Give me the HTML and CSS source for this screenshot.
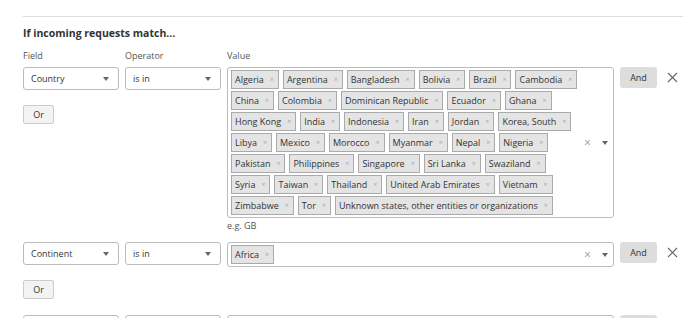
FILE: index.html
```html
<!DOCTYPE html>
<html lang="en">
<head>
  <meta charset="UTF-8" />
  <title>Rule builder</title>
  <link rel="stylesheet" href="styles.css">
</head>
<body>
  <div class="page">
    <p class="cut-text">Describe this rule so you can spot it later quickly</p>
    <hr class="divider">

    <h2 class="section-title">If incoming requests match...</h2>

    <div class="labels">
      <span class="col-field">Field</span>
      <span class="col-op">Operator</span>
      <span class="col-value">Value</span>
    </div>

    <!-- Expression 1 -->
    <div class="expr">
      <div class="col-field">
        <div class="select">Country <span class="caret"></span></div>
        <button class="btn-or">Or</button>
      </div>
      <div class="col-op">
        <div class="select">is in <span class="caret"></span></div>
      </div>
      <div class="col-value">
        <div class="multi" id="countries"></div>
        <div class="hint">e.g. GB</div>
      </div>
      <button class="btn-and">And</button>
      <span class="remove">
        <svg width="11" height="11" viewBox="0 0 11 11"><path d="M1 1L10 10M10 1L1 10" stroke="#666" stroke-width="1.1" fill="none"/></svg>
      </span>
    </div>

    <!-- Expression 2 -->
    <div class="expr">
      <div class="col-field">
        <div class="select">Continent <span class="caret"></span></div>
        <button class="btn-or">Or</button>
      </div>
      <div class="col-op">
        <div class="select">is in <span class="caret"></span></div>
      </div>
      <div class="col-value">
        <div class="multi" id="continents"></div>
      </div>
      <button class="btn-and">And</button>
      <span class="remove">
        <svg width="11" height="11" viewBox="0 0 11 11"><path d="M1 1L10 10M10 1L1 10" stroke="#666" stroke-width="1.1" fill="none"/></svg>
      </span>
    </div>

    <!-- Expression 3 (partly visible) -->
    <div class="expr">
      <div class="col-field"><div class="select">&nbsp;</div></div>
      <div class="col-op"><div class="select">&nbsp;</div></div>
      <div class="col-value"><div class="multi"><span class="tags"></span></div></div>
      <button class="btn-and">And</button>
    </div>
  </div>

  <script>
    const countries = ['Algeria', 'Argentina', 'Bangladesh', 'Bolivia', 'Brazil', 'Cambodia',
      'China', 'Colombia', 'Dominican Republic', 'Ecuador', 'Ghana',
      'Hong Kong', 'India', 'Indonesia', 'Iran', 'Jordan', 'Korea, South',
      'Libya', 'Mexico', 'Morocco', 'Myanmar', 'Nepal', 'Nigeria',
      'Pakistan', 'Philippines', 'Singapore', 'Sri Lanka', 'Swaziland',
      'Syria', 'Taiwan', 'Thailand', 'United Arab Emirates', 'Vietnam',
      'Zimbabwe', 'Tor', 'Unknown states, other entities or organizations'];

    // Build a multi-select box with tags, a clear button and a caret
    function fillMulti(id, items) {
      const box = document.getElementById(id);
      const tags = document.createElement('span');
      tags.className = 'tags';
      items.forEach(function (name) {
        const tag = document.createElement('span');
        tag.className = 'tag';
        tag.innerHTML = name + '<i class="tag-x">×</i>';
        tags.appendChild(tag);
      });
      box.appendChild(tags);
      const controls = document.createElement('span');
      controls.className = 'multi-controls';
      controls.innerHTML = '<i class="clear">×</i><span class="caret"></span>';
      box.appendChild(controls);
    }

    fillMulti('countries', countries);
    fillMulti('continents', ['Africa']);
  </script>
</body>
</html>
```

FILE: styles.css
```css
* {
  box-sizing: border-box;
}
body {
  margin: 0;
  font-family: 'Open Sans', 'Noto Sans', sans-serif;
  font-size: 9px;
  color: #333;
  background: #fff;
}
.page {
  padding: 0 17px 0 23px;
  overflow: hidden;
}
.cut-text {
  margin: -12px 0 0;
  line-height: 14px;
  color: #555;
  padding-left: 40px;
}
.divider {
  border: none;
  border-top: 1px solid #ddd;
  margin: 14px 0 0;
}
.section-title {
  font-size: 10.5px;
  font-weight: 700;
  color: #333;
  margin: 9px 0 0;
  line-height: 14px;
}
.labels {
  display: flex;
  gap: 6px;
  margin-top: 9px;
  line-height: 14px;
  color: #555;
}
.col-field,
.col-op {
  width: 96px;
  flex: none;
}
.col-value {
  width: 387px;
  flex: none;
}
.expr {
  display: flex;
  align-items: flex-start;
  gap: 6px;
  margin-top: 4px;
  margin-bottom: 9px;
}
/* Single select */
.select {
  position: relative;
  height: 23px;
  line-height: 21px;
  border: 1px solid #bbb;
  border-radius: 3px;
  padding: 0 7px;
  color: #333;
  background: #fff;
}
.caret {
  position: absolute;
  right: 9px;
  top: 9px;
  width: 0;
  height: 0;
  border-left: 3.5px solid transparent;
  border-right: 3.5px solid transparent;
  border-top: 4px solid #666;
}
.btn-or {
  display: block;
  margin-top: 15px;
  margin-bottom: 7px;
  width: 31px;
  height: 19px;
  padding: 0;
  border: 1px solid #ccc;
  border-radius: 2px;
  background: #f3f3f3;
  font: inherit;
  color: #333;
}
/* Multi select with tags */
.multi {
  position: relative;
  border: 1px solid #bbb;
  border-radius: 3px;
  padding: 2px 30px 2px 3px;
  min-height: 25px;
}
.tags {
  display: flex;
  flex-wrap: wrap;
  gap: 2px 4px;
}
.tag {
  display: inline-flex;
  align-items: center;
  height: 19px;
  padding: 0 4px 0 3px;
  border: 1px solid #aaa;
  background: #e4e4e4;
  color: #333;
  white-space: nowrap;
}
.tag-x {
  font-style: normal;
  color: #aaa;
  font-size: 7px;
  margin-left: 6px;
}
.multi-controls {
  position: absolute;
  right: 0;
  top: 50%;
  width: 40px;
  height: 12px;
  margin-top: -6px;
}
.multi-controls .clear {
  position: absolute;
  left: 11px;
  top: -1px;
  font-style: normal;
  font-size: 12px;
  line-height: 14px;
  color: #999;
}
.multi-controls .caret {
  right: 5px;
  top: 4px;
}
.hint {
  margin-top: 1px;
  line-height: 14px;
  color: #555;
}
.btn-and {
  width: 37px;
  height: 21px;
  padding: 0;
  border: none;
  border-radius: 3px;
  background: #ddd;
  font: inherit;
  color: #333;
}
.remove {
  margin: 5px 0 0 4px;
  line-height: 0;
}
```
